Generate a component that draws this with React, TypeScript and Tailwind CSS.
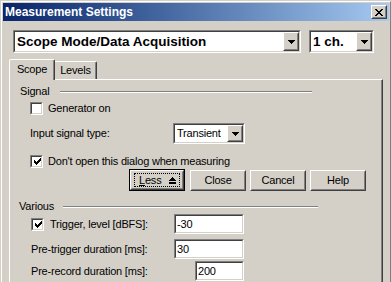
import React from "react";

function Sunken({ className = "", children }: { className?: string; children?: React.ReactNode }) {
  return (
    <div className={`border border-t-[#808080] border-l-[#808080] border-b-white border-r-white ${className}`}>
      <div className="h-full w-full border border-t-[#404040] border-l-[#404040] border-b-[#D4D0C8] border-r-[#D4D0C8] bg-white flex items-center">
        {children}
      </div>
    </div>
  );
}

function Raised({ className = "", children }: { className?: string; children?: React.ReactNode }) {
  return (
    <div className={`border border-t-white border-l-white border-r-[#404040] border-b-[#404040] bg-[#D4D0C8] ${className}`}>
      <div className="h-full w-full border border-t-[#D4D0C8] border-l-[#D4D0C8] border-r-[#808080] border-b-[#808080] flex items-center justify-center">
        {children}
      </div>
    </div>
  );
}

function DownArrow() {
  return (
    <svg width="7" height="4" viewBox="0 0 7 4" shapeRendering="crispEdges">
      <path d="M0 0h7v1h-1v1h-1v1h-1v1h-1v-1h-1v-1h-1v-1h-1z" fill="#000" />
    </svg>
  );
}

function Combo({ text, className, bold }: { text: string; className: string; bold?: boolean }) {
  return (
    <Sunken className={className}>
      <span className={`flex-1 pl-[2px] whitespace-nowrap ${bold ? "font-bold text-[13.5px]" : "tracking-[-0.2px]"}`}>{text}</span>
      <Raised className="w-[16px] h-full">
        <DownArrow />
      </Raised>
    </Sunken>
  );
}

function Check({ checked }: { checked?: boolean }) {
  return (
    <Sunken className="w-[13px] h-[13px] shrink-0">
      {checked && (
        <svg width="7" height="7" viewBox="0 0 7 7" className="ml-[2px]" shapeRendering="crispEdges">
          <path d="M6 0h1v3h-1v1h-1v1h-1v1h-1v1h-1v-1h-1v-1h-1v-3h1v1h1v1h1v-1h1v-1h1z" fill="#000" />
        </svg>
      )}
    </Sunken>
  );
}

function Edit({ value, className }: { value: string; className: string }) {
  return (
    <Sunken className={className}>
      <span className="pl-[1px] tracking-[-0.2px]">{value}</span>
    </Sunken>
  );
}

function GroupHeader({ label, pad, labelW, lineW }: { label: string; pad: string; labelW: string; lineW: string }) {
  return (
    <div className={`h-[13px] flex items-center ${pad}`}>
      <span className={`${labelW} tracking-[-0.2px]`}>{label}</span>
      <div className={`${lineW} h-[2px] border-t border-t-[#808080] border-b border-b-white`} />
    </div>
  );
}

function Button({ label }: { label: string }) {
  return (
    <Raised className="w-[56px] h-[21px]">
      <span className="tracking-[-0.2px]">{label}</span>
    </Raised>
  );
}

export default function App() {
  return (
    <div className="w-[391px] h-[282px] overflow-hidden bg-[#D4D0C8] font-['Liberation_Sans',Arial,sans-serif] text-[11px] leading-[13px] text-black">
      <div className="w-[392px] h-[300px] border border-t-[#D4D0C8] border-l-[#D4D0C8] border-r-[#404040] border-b-[#404040]">
        <div className="h-full border border-t-white border-l-white border-r-[#808080] border-b-[#808080] p-px flex flex-col">
          {/* title bar */}
          <div className="h-[18px] shrink-0 flex items-center px-[2px] bg-linear-to-r from-[#0A246A] to-[#A6CAF0]">
            <span className="text-white font-bold text-[12px]">Measurement Settings</span>
            <Raised className="ml-auto w-[16px] h-[14px]">
              <svg width="8" height="7" viewBox="0 0 8 7" shapeRendering="crispEdges">
                <path d="M0 0h2v1h1v1h2v-1h1v-1h2v1h-1v1h-1v1h-1v1h1v1h1v1h1v1h-2v-1h-1v-1h-2v1h-1v1h-2v-1h1v-1h1v-1h1v-1h-1v-1h-1v-1h-1z" fill="#000" />
              </svg>
            </Raised>
          </div>

          {/* top selectors */}
          <div className="mt-[9px] ml-[10px] flex gap-[8px]">
            <Combo text="Scope Mode/Data Acquisition" className="w-[288px] h-[23px]" bold />
            <Combo text="1 ch." className="w-[65px] h-[23px]" bold />
          </div>

          {/* tabs */}
          <div className="mt-[6px] ml-[6px] h-[20px] flex items-end">
            <div className="relative z-10 -mb-px w-[46px] h-[21px] bg-[#D4D0C8] rounded-t-[2px] border-t border-l border-t-white border-l-white border-r border-r-[#404040] shadow-[inset_-1px_0_0_#808080] flex justify-center pt-[3px]">
              <span className="tracking-[-0.2px]">Scope</span>
            </div>
            <div className="w-[42px] h-[18px] rounded-tr-[2px] border-t border-t-white border-r border-r-[#404040] shadow-[inset_-1px_0_0_#808080] flex justify-center pt-[2px]">
              <span className="tracking-[-0.2px]">Levels</span>
            </div>
          </div>

          {/* tab panel */}
          <div className="ml-[6px] w-[374px] flex-1 border-t border-l border-t-white border-l-white border-r border-r-[#404040] shadow-[inset_-1px_0_0_#808080] flex flex-col">
            <div className="mt-[5px]">
              <GroupHeader label="Signal" pad="pl-[10px]" labelW="w-[40px]" lineW="w-[252px]" />
            </div>

            <div className="mt-[4px] h-[13px] pl-[20px] flex items-center">
              <Check />
              <span className="ml-[5px] tracking-[-0.2px]">Generator on</span>
            </div>

            <div className="mt-[8px] h-[21px] pl-[20px] flex items-center">
              <span className="w-[143px] tracking-[-0.2px]">Input signal type:</span>
              <Combo text="Transient" className="w-[72px] h-[21px]" />
            </div>

            <div className="mt-[11px] h-[13px] pl-[20px] flex items-center">
              <Check checked />
              <span className="ml-[5px] tracking-[-0.2px]">Don't open this dialog when measuring</span>
            </div>

            <div className="mt-[1px] h-[22px] pl-[119px] flex items-center">
              <div className="w-[56px] h-[22px] border border-black">
                <Raised className="w-full h-full">
                  <div className="w-[46px] h-[14px] border border-dotted border-black flex items-center pl-[4px]">
                    <span className="tracking-[-0.2px]">
                      <span className="underline">L</span>ess
                    </span>
                    <svg width="7" height="7" viewBox="0 0 7 7" className="ml-auto mr-[3px]" shapeRendering="crispEdges">
                      <path d="M3 0h1v1h1v1h1v1h1v1h-7v-1h1v-1h1v-1h1zM0 5h7v2h-7z" fill="#000" />
                    </svg>
                  </div>
                </Raised>
              </div>
              <div className="ml-[5px]">
                <Button label="Close" />
              </div>
              <div className="ml-[4px]">
                <Button label="Cancel" />
              </div>
              <div className="ml-[4px]">
                <Button label="Help" />
              </div>
            </div>

            <div className="mt-[9px]">
              <GroupHeader label="Various" pad="pl-[9px]" labelW="w-[44px]" lineW="w-[255px]" />
            </div>

            <div className="mt-[1px] h-[20px] pl-[21px] flex items-center">
              <Check checked />
              <span className="ml-[6px] w-[124px] tracking-[-0.2px]">Trigger, level [dBFS]:</span>
              <Edit value="-30" className="w-[70px] h-[20px]" />
            </div>

            <div className="mt-[5px] h-[20px] pl-[21px] flex items-center">
              <span className="w-[143px] tracking-[-0.2px]">Pre-trigger duration [ms]:</span>
              <Edit value="30" className="w-[70px] h-[20px]" />
            </div>

            <div className="mt-[2px] h-[20px] pl-[21px] flex items-center">
              <span className="w-[164px] tracking-[-0.2px]">Pre-record duration [ms]:</span>
              <Edit value="200" className="w-[49px] h-[20px]" />
            </div>
          </div>
        </div>
      </div>
    </div>
  );
}
